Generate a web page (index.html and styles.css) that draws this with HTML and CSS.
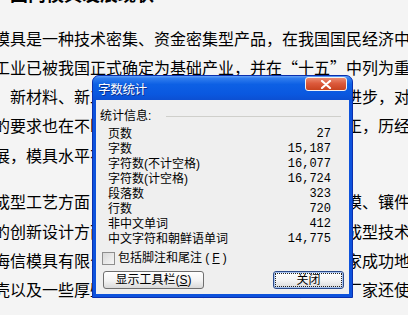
FILE: index.html
```html
<!DOCTYPE html>
<html lang="zh-CN">
<head>
<meta charset="UTF-8">
<title>字数统计</title>
<link rel="stylesheet" href="styles.css">
</head>
<body>
<div class="page">
  <!-- 文档正文 -->
  <div class="doc">
    <h2 class="doc-title">国内模具发展现状</h2>
    <p class="para">
      <span class="ln">模具是一种技术密集、资金密集型产品，在我国国民经济中</span>
      <span class="ln">工业已被我国正式确定为基础产业，并在“十五”中列为重</span>
      <span class="ln">、新材料、新工艺和新技术的应用，模具技术有了进步，对</span>
      <span class="ln">的要求也在不断提高，我国模具工业的发展已步入正，历经</span>
      <span class="ln">展，模具水平有了较大的提高。</span>
    </p>
    <p class="para second">
      <span class="ln">成型工艺方面，多工位级进模、精密冲压模和叠层模、镶件</span>
      <span class="ln">的创新设计方面，采用了先进的计算机辅助设计与成型技术的</span>
      <span class="ln">海信模具有限公司等企业中，现已有越来越多的厂家成功地</span>
      <span class="ln">壳以及一些厚壁零件的模具上运用气辅技术，一些厂家还使用</span>
    </p>
  </div>

  <!-- 字数统计 对话框 -->
  <div class="dialog">
    <div class="titlebar">
      <span class="title">字数统计</span>
      <button class="btn-close" aria-label="关闭">
        <svg width="12" height="9" viewBox="0 0 12 9"><path d="M2 1 L10 8 M10 1 L2 8" stroke="#fff" stroke-width="2.2" stroke-linecap="round"/></svg>
      </button>
    </div>
    <div class="client">
      <div class="group-head"><span>统计信息:</span><i class="rule"></i></div>
      <div class="stats">
        <div class="stat"><span>页数</span><span class="num">27</span></div>
        <div class="stat"><span>字数</span><span class="num">15,187</span></div>
        <div class="stat"><span>字符数(不计空格)</span><span class="num">16,077</span></div>
        <div class="stat"><span>字符数(计空格)</span><span class="num">16,724</span></div>
        <div class="stat"><span>段落数</span><span class="num">323</span></div>
        <div class="stat"><span>行数</span><span class="num">720</span></div>
        <div class="stat"><span>非中文单词</span><span class="num">412</span></div>
        <div class="stat"><span>中文字符和朝鲜语单词</span><span class="num">14,775</span></div>
      </div>
      <label class="check"><span class="box"></span>包括脚注和尾注 (<u>F</u>)</label>
      <div class="actions">
        <button class="btn btn-tools">显示工具栏(<u>S</u>)</button>
        <button class="btn btn-ok focus">关闭</button>
      </div>
    </div>
  </div>
</div>
</body>
</html>
```

FILE: styles.css
```css
* { box-sizing:border-box; }
html, body { margin:0; padding:0; overflow:hidden; }
body { background:#f4f4f4; }

.page { position:relative; width:408px; height:315px; overflow:hidden; background:#f4f4f4; }

/* 文档正文 */
.doc { margin-left:-6px; font-family:"Noto Sans CJK SC", sans-serif; font-size:16px; color:#000; white-space:nowrap; }
.doc-title { font-size:18px; font-weight:bold; line-height:20px; margin:-17px 0 0 16px; }
.para { margin:20.5px 0 0; line-height:29.3px; }
.para.second { margin-top:17.5px; }
.ln { display:block; }

/* 对话框 */
.dialog { position:absolute; left:92px; top:75px; width:261px; height:223px; display:flex; flex-direction:column; background:#0d52dc; border:1px solid #0a2fae; border-radius:7px 7px 0 0; padding:0 3px 3px; }
.titlebar { height:24px; margin:0 -3px; padding:0 5px; display:flex; align-items:center; justify-content:space-between; border-radius:6px 6px 0 0; background:linear-gradient(#62a0f6 0%, #2f7cee 10%, #0d60e4 35%, #0a58e0 75%, #0c4fd2 100%); }
.title { color:#fff; font-family:"Noto Sans CJK SC", sans-serif; font-size:12.5px; letter-spacing:-0.3px; text-shadow:1px 1px 0 #0a2e8c; }
.btn-close { align-self:flex-start; margin-top:1px; width:42px; height:14px; padding:0; display:flex; align-items:center; justify-content:center; border:1px solid #f2f2f2; border-radius:3px; background:linear-gradient(#eb8a70 0%, #dc5a3c 45%, #c8421f 100%); }
.btn-close svg { display:block; }

.client { flex:1; background:#efefef; padding:9px 5px 0 0; font-family:"Liberation Sans", "Noto Sans CJK SC", sans-serif; font-size:12px; line-height:15px; color:#000; }
.group-head { display:flex; align-items:center; padding-left:4px; }
.rule { flex:1; height:1px; margin:0 3px 0 15px; background:#cfcfcb; }
.stats { margin-top:3px; padding:0 13px 0 12px; }
.stat { display:flex; justify-content:space-between; }
.num { font-family:"Liberation Mono", monospace; }

.check { display:flex; align-items:center; gap:3px; margin-top:4px; padding-left:6px; }
.box { width:13px; height:13px; border:1px solid #8e8e8e; background:linear-gradient(135deg, #d8d8d8, #f6f6f6); }
.check u, .btn u { text-decoration:underline; }

.actions { display:flex; justify-content:space-between; margin-top:5px; padding-left:7px; }
.btn { position:relative; height:18px; padding:0; font:inherit; color:#000; border:1px solid #6f6f6f; border-radius:3px; background:linear-gradient(#ffffff 0%, #f3f3f3 55%, #d9d9d9 100%); }
.btn-tools { width:101px; }
.btn-ok { width:71px; }
.btn.focus { border-color:#2b4a8a; box-shadow:inset 0 0 0 1px #a8c4f0; }
.btn.focus::after { content:""; position:absolute; inset:1px; border:1px dotted #222; }
```
